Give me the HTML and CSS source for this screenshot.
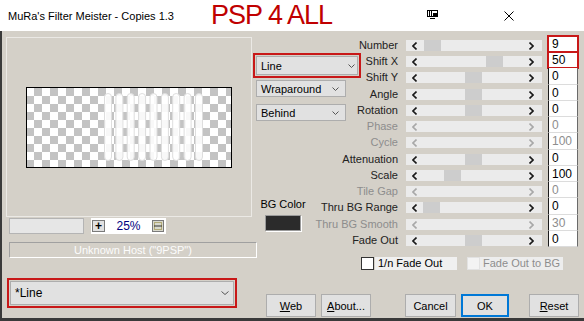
FILE: index.html
```html
<!DOCTYPE html>
<html lang="en">
<head>
    <meta charset="UTF-8">
    <title>MuRa's Filter Meister - Copies 1.3</title>
    <link rel="stylesheet" href="styles.css">
</head>
<body>
<div class="window">
    <div class="titlebar">
        <span class="title">MuRa's Filter Meister - Copies 1.3</span>
        <span class="brand">PSP 4 ALL</span>
        <svg class="tb-overlay" width="11" height="9" viewBox="0 0 11 9">
            <rect x="0.5" y="0.5" width="10" height="6" fill="none" stroke="#000"/>
            <path d="M2.5 1v5M4.5 1v5M3 8.5h5" stroke="#000"/>
            <rect x="6" y="3" width="4" height="3" fill="#000"/>
        </svg>
        <svg class="tb-close" width="10" height="10" viewBox="0 0 10 10">
            <path d="M0.5 0.5L9.5 9.5M9.5 0.5L0.5 9.5" stroke="#000" stroke-width="1"/>
        </svg>
    </div>

    <div class="client">
        <div class="main">
            <div class="left">
                <div class="preview">
                    <div class="checker">
                        <svg width="204" height="79" viewBox="0 0 204 79">
                            <g fill="rgba(255,255,255,0.88)" stroke="#dedede" stroke-width="1">
                                <rect x="77.5" y="5.5" width="7" height="67" rx="3.5"/>
                                <rect x="88.9" y="5.5" width="7" height="67" rx="3.5"/>
                                <rect x="100.2" y="5.5" width="7" height="67" rx="3.5"/>
                                <rect x="111.6" y="5.5" width="7" height="67" rx="3.5"/>
                                <rect x="123" y="5.5" width="7" height="67" rx="3.5"/>
                                <rect x="134.4" y="5.5" width="7" height="67" rx="3.5"/>
                                <rect x="145.7" y="5.5" width="7" height="67" rx="3.5"/>
                                <rect x="157.1" y="5.5" width="7" height="67" rx="3.5"/>
                                <rect x="168.5" y="5.5" width="7" height="67" rx="3.5"/>
                            </g>
                        </svg>
                    </div>
                </div>
                <div class="zoombar">
                    <div class="progress"></div>
                    <div class="zoomctl">
                        <span class="zbtn">+</span>
                        <span class="zval">25%</span>
                        <svg class="zfit" width="12" height="12" viewBox="0 0 12 12">
                            <rect x="0.5" y="0.5" width="11" height="11" fill="#d8d8cc" stroke="#7a7a7a"/>
                            <rect x="2.5" y="2.5" width="7" height="7" fill="none" stroke="#8a7a20" stroke-dasharray="1 1"/>
                            <path d="M2 6h8" stroke="#333"/>
                        </svg>
                    </div>
                </div>
                <div class="status">Unknown Host ("9PSP")</div>
            </div>

            <div class="right">
                <div class="params">
                    <div class="rows">
                        <div class="row"><span class="lbl">Number</span><div class="track"><span class="arr l"><svg width="5" height="8" viewBox="0 0 5 8"><path d="M4.5 0.5L1 4l3.5 3.5"/></svg></span><span class="area"><span class="thumb" style="margin-left:3px"></span></span><span class="arr r"><svg width="5" height="8" viewBox="0 0 5 8"><path d="M0.5 0.5L4 4L0.5 7.5"/></svg></span></div><span class="edit mark">9</span></div>
                        <div class="row"><span class="lbl">Shift X</span><div class="track"><span class="arr l"><svg width="5" height="8" viewBox="0 0 5 8"><path d="M4.5 0.5L1 4l3.5 3.5"/></svg></span><span class="area"><span class="thumb" style="margin-left:65px"></span></span><span class="arr r"><svg width="5" height="8" viewBox="0 0 5 8"><path d="M0.5 0.5L4 4L0.5 7.5"/></svg></span></div><span class="edit mark">50</span></div>
                        <div class="row"><span class="lbl">Shift Y</span><div class="track"><span class="arr l"><svg width="5" height="8" viewBox="0 0 5 8"><path d="M4.5 0.5L1 4l3.5 3.5"/></svg></span><span class="area"><span class="thumb" style="margin-left:44px"></span></span><span class="arr r"><svg width="5" height="8" viewBox="0 0 5 8"><path d="M0.5 0.5L4 4L0.5 7.5"/></svg></span></div><span class="edit">0</span></div>
                        <div class="row"><span class="lbl">Angle</span><div class="track"><span class="arr l"><svg width="5" height="8" viewBox="0 0 5 8"><path d="M4.5 0.5L1 4l3.5 3.5"/></svg></span><span class="area"><span class="thumb" style="margin-left:44px"></span></span><span class="arr r"><svg width="5" height="8" viewBox="0 0 5 8"><path d="M0.5 0.5L4 4L0.5 7.5"/></svg></span></div><span class="edit">0</span></div>
                        <div class="row"><span class="lbl">Rotation</span><div class="track"><span class="arr l"><svg width="5" height="8" viewBox="0 0 5 8"><path d="M4.5 0.5L1 4l3.5 3.5"/></svg></span><span class="area"><span class="thumb" style="margin-left:44px"></span></span><span class="arr r"><svg width="5" height="8" viewBox="0 0 5 8"><path d="M0.5 0.5L4 4L0.5 7.5"/></svg></span></div><span class="edit">0</span></div>
                        <div class="row off"><span class="lbl">Phase</span><div class="track"><span class="arr l"><svg width="5" height="8" viewBox="0 0 5 8"><path d="M4.5 0.5L1 4l3.5 3.5"/></svg></span><span class="area"></span><span class="arr r"><svg width="5" height="8" viewBox="0 0 5 8"><path d="M0.5 0.5L4 4L0.5 7.5"/></svg></span></div><span class="edit">0</span></div>
                        <div class="row off"><span class="lbl">Cycle</span><div class="track"><span class="arr l"><svg width="5" height="8" viewBox="0 0 5 8"><path d="M4.5 0.5L1 4l3.5 3.5"/></svg></span><span class="area"></span><span class="arr r"><svg width="5" height="8" viewBox="0 0 5 8"><path d="M0.5 0.5L4 4L0.5 7.5"/></svg></span></div><span class="edit">100</span></div>
                        <div class="row"><span class="lbl">Attenuation</span><div class="track"><span class="arr l"><svg width="5" height="8" viewBox="0 0 5 8"><path d="M4.5 0.5L1 4l3.5 3.5"/></svg></span><span class="area"><span class="thumb" style="margin-left:44px"></span></span><span class="arr r"><svg width="5" height="8" viewBox="0 0 5 8"><path d="M0.5 0.5L4 4L0.5 7.5"/></svg></span></div><span class="edit">0</span></div>
                        <div class="row"><span class="lbl">Scale</span><div class="track"><span class="arr l"><svg width="5" height="8" viewBox="0 0 5 8"><path d="M4.5 0.5L1 4l3.5 3.5"/></svg></span><span class="area"><span class="thumb" style="margin-left:23px"></span></span><span class="arr r"><svg width="5" height="8" viewBox="0 0 5 8"><path d="M0.5 0.5L4 4L0.5 7.5"/></svg></span></div><span class="edit">100</span></div>
                        <div class="row off"><span class="lbl">Tile Gap</span><div class="track"><span class="arr l"><svg width="5" height="8" viewBox="0 0 5 8"><path d="M4.5 0.5L1 4l3.5 3.5"/></svg></span><span class="area"></span><span class="arr r"><svg width="5" height="8" viewBox="0 0 5 8"><path d="M0.5 0.5L4 4L0.5 7.5"/></svg></span></div><span class="edit">0</span></div>
                        <div class="row"><span class="lbl">Thru BG Range</span><div class="track"><span class="arr l"><svg width="5" height="8" viewBox="0 0 5 8"><path d="M4.5 0.5L1 4l3.5 3.5"/></svg></span><span class="area"><span class="thumb" style="margin-left:2px"></span></span><span class="arr r"><svg width="5" height="8" viewBox="0 0 5 8"><path d="M0.5 0.5L4 4L0.5 7.5"/></svg></span></div><span class="edit">0</span></div>
                        <div class="row off"><span class="lbl">Thru BG Smooth</span><div class="track"><span class="arr l"><svg width="5" height="8" viewBox="0 0 5 8"><path d="M4.5 0.5L1 4l3.5 3.5"/></svg></span><span class="area"></span><span class="arr r"><svg width="5" height="8" viewBox="0 0 5 8"><path d="M0.5 0.5L4 4L0.5 7.5"/></svg></span></div><span class="edit">30</span></div>
                        <div class="row"><span class="lbl">Fade Out</span><div class="track"><span class="arr l"><svg width="5" height="8" viewBox="0 0 5 8"><path d="M4.5 0.5L1 4l3.5 3.5"/></svg></span><span class="area"><span class="thumb" style="margin-left:44px"></span></span><span class="arr r"><svg width="5" height="8" viewBox="0 0 5 8"><path d="M0.5 0.5L4 4L0.5 7.5"/></svg></span></div><span class="edit">0</span></div>
                    </div>

                    <div class="side">
                        <div class="combo combo-line mark"><span>Line</span><svg class="chev" width="7" height="4" viewBox="0 0 7 4"><path d="M0.5 0.5L3.5 3.5L6.5 0.5"/></svg></div>
                        <div class="combo combo-sm"><span>Wraparound</span><svg class="chev" width="7" height="4" viewBox="0 0 7 4"><path d="M0.5 0.5L3.5 3.5L6.5 0.5"/></svg></div>
                        <div class="combo combo-sm second"><span>Behind</span><svg class="chev" width="7" height="4" viewBox="0 0 7 4"><path d="M0.5 0.5L3.5 3.5L6.5 0.5"/></svg></div>
                        <div class="bgcolor">
                            <span>BG Color</span>
                            <span class="swatch"></span>
                        </div>
                    </div>
                </div>

                <div class="checks">
                    <span class="cb"></span><span class="cb-lbl">1/n Fade Out</span>
                    <span class="cb off"></span><span class="cb-lbl off">Fade Out to BG</span>
                </div>
            </div>
        </div>

        <div class="footer">
            <div class="combo combo-preset mark"><span>*Line</span><svg class="chev" width="8" height="4" viewBox="0 0 8 4"><path d="M0.5 0.5L4 3.5L7.5 0.5"/></svg></div>
            <button class="btn web"><u>W</u>eb</button>
            <button class="btn about"><u>A</u>bout...</button>
            <button class="btn cancel">Cancel</button>
            <button class="btn ok">OK</button>
            <button class="btn reset"><u>R</u>eset</button>
        </div>
    </div>
</div>
</body>
</html>
```

FILE: styles.css
```css
body {
    margin: 0;
    background-color: #3a3a3a;
    font-family: "Liberation Sans", Arial, sans-serif;
    font-size: 11px;
    color: #000;
}
.window {
    width: 584px;
    height: 321px;
    overflow: hidden;
}
.titlebar {
    height: 31px;
    background-color: #fff;
    display: flex;
    align-items: center;
}
.title {
    margin-left: 8px;
    font-size: 11px;
}
.brand {
    margin-left: 37px;
    font-size: 27px;
    letter-spacing: -1px;
    color: #c00000;
}
.tb-overlay {
    margin-left: auto;
    margin-top: -3px;
}
.tb-close {
    margin-left: 66px;
    margin-right: 70px;
}
.client {
    margin-left: 2px;
    height: 287px;
    background-color: #d4d0c8;
}
.main {
    display: flex;
    height: 240px;
}
.left {
    width: 251px;
    flex: none;
}
.preview {
    margin: 6px 0 0 4px;
    width: 244px;
    height: 178px;
    border: 1px solid #ebe9e5;
    display: flex;
    align-items: center;
    justify-content: center;
}
.checker {
    width: 204px;
    height: 79px;
    border: 1px solid #000;
    background: conic-gradient(#c3c3c3 0 25%, #fff 0 50%, #c3c3c3 0 75%, #fff 0);
    background-size: 16px 16px;
    background-position: -1px 0;
}
.checker svg {
    display: block;
}
.zoombar {
    display: flex;
    gap: 7px;
    margin: 1px 0 0 7px;
    height: 16px;
}
.progress {
    width: 75px;
    box-sizing: border-box;
    border: 1px solid #b4b4b4;
    background-color: #e6e6e6;
}
.zoomctl {
    width: 75px;
    background-color: #fff;
    display: flex;
    align-items: center;
    padding: 0 2px 0 1px;
    box-sizing: border-box;
}
.zbtn {
    width: 13px;
    height: 12px;
    box-sizing: border-box;
    border: 1px solid #7a7a7a;
    background-color: #e1e1e1;
    font-weight: bold;
    font-size: 12px;
    line-height: 10px;
    text-align: center;
}
.zval {
    flex: 1;
    text-align: center;
    color: #000080;
    font-size: 12px;
}
.status {
    margin: 8px 0 0 7px;
    width: 248px;
    height: 16px;
    box-sizing: border-box;
    border-top: 1px solid #a0a0a0;
    border-left: 1px solid #a0a0a0;
    border-right: 1px solid #fff;
    border-bottom: 1px solid #fff;
    color: #fcfcfc;
    text-align: center;
    line-height: 14px;
}
.right {
    flex: none;
    width: 331px;
    padding-top: 5px;
}
.params {
    display: grid;
}
.params > .rows,
.params > .side {
    grid-area: 1 / 1;
}
.rows {
    display: flex;
    flex-direction: column;
}
.row {
    display: flex;
    height: 16px;
}
.row:nth-child(4n+3) {
    height: 17px;
}
.lbl {
    width: 145px;
    text-align: right;
    line-height: 13px;
    padding-top: 3px;
    box-sizing: border-box;
    white-space: nowrap;
    color: #222;
}
.row.off .lbl,
.row.off .edit {
    color: #8d8d8d;
}
.track {
    display: flex;
    margin: 4px 0 0 8px;
    width: 136px;
    height: 11px;
    background-color: #ebebeb;
}
.arr {
    width: 15px;
    display: flex;
    align-items: center;
    box-sizing: border-box;
}
.arr.l {
    padding-left: 6px;
}
.arr.r {
    padding-left: 2px;
}
.arr svg path {
    fill: none;
    stroke: #1a1a1a;
    stroke-width: 1.6;
}
.row.off .arr svg path {
    stroke: #a8a8a8;
}
.area {
    flex: 1;
    display: flex;
}
.thumb {
    width: 17px;
    height: 11px;
    background-color: #cdcdcd;
}
.edit {
    margin-left: 6px;
    width: 30px;
    box-sizing: border-box;
    background-color: #fff;
    border-left: 1px solid #1c1c1c;
    border-right: 1px solid #6a6a6a;
    border-bottom: 1px solid #dcdcdc;
    padding: 1px 0 0 3px;
    font-size: 12px;
    line-height: 14px;
}
.mark {
    outline: 2px solid #c81818;
}
.edit.mark {
    outline-offset: -1px;
}
.side {
    display: flex;
    flex-direction: column;
    align-items: flex-start;
}
.combo {
    display: flex;
    align-items: center;
    justify-content: space-between;
    box-sizing: border-box;
    background-color: #e1e1e1;
    border: 1px solid #adadad;
    padding: 0 6px 0 4px;
}
.chev path {
    fill: none;
    stroke: #555;
    stroke-width: 1;
}
.combo-line {
    margin: 20px 0 0 3px;
    width: 102px;
    height: 19px;
    padding-right: 2px;
    outline-offset: 1px;
}
.combo-sm {
    margin: 5px 0 0 3px;
    width: 90px;
    height: 17px;
}
.combo-sm.second {
    margin-top: 7px;
}
.bgcolor {
    margin-top: 77px;
    width: 60px;
    display: flex;
    flex-direction: column;
    align-items: center;
    line-height: 13px;
}
.swatch {
    margin-top: 4px;
    width: 36px;
    height: 16px;
    box-sizing: border-box;
    background-color: #2b2b2b;
    border: 1px solid #9a9a9a;
    box-shadow: 1px 1px 0 #fff;
}
.checks {
    display: flex;
    align-items: center;
    margin-top: 10px;
    padding-left: 108px;
}
.cb {
    width: 13px;
    height: 13px;
    box-sizing: border-box;
    border: 1px solid #333;
    background-color: #fff;
}
.cb.off {
    margin-left: 10px;
    border-color: #e2e2e2;
    background-color: #f3f3f3;
}
.cb-lbl {
    margin-left: 1px;
    width: 82px;
    height: 13px;
    box-sizing: border-box;
    padding-left: 3px;
    line-height: 13px;
    background-color: #f0f0f0;
    white-space: nowrap;
}
.cb-lbl.off {
    margin-left: 0;
    width: 83px;
    color: #8d8d8d;
    background-color: #ededed;
}
.footer {
    display: flex;
    height: 47px;
}
.combo-preset {
    margin: 10px 0 0 8px;
    width: 224px;
    height: 24px;
    font-size: 12px;
    padding-right: 4px;
    outline-offset: 1px;
}
.btn {
    align-self: flex-end;
    margin: 0 0 1px 5px;
    width: 50px;
    height: 23px;
    padding: 0;
    box-sizing: border-box;
    background-color: #e1e1e1;
    border: 1px solid #adadad;
    font-family: "Liberation Sans", Arial, sans-serif;
    font-size: 11px;
    color: #000;
}
.btn.web {
    margin-left: 32px;
}
.btn.cancel {
    margin-left: 34px;
    width: 51px;
}
.btn.ok {
    width: 48px;
    border: 2px solid #0078d7;
}
.btn.reset {
    margin-left: 20px;
}
```
